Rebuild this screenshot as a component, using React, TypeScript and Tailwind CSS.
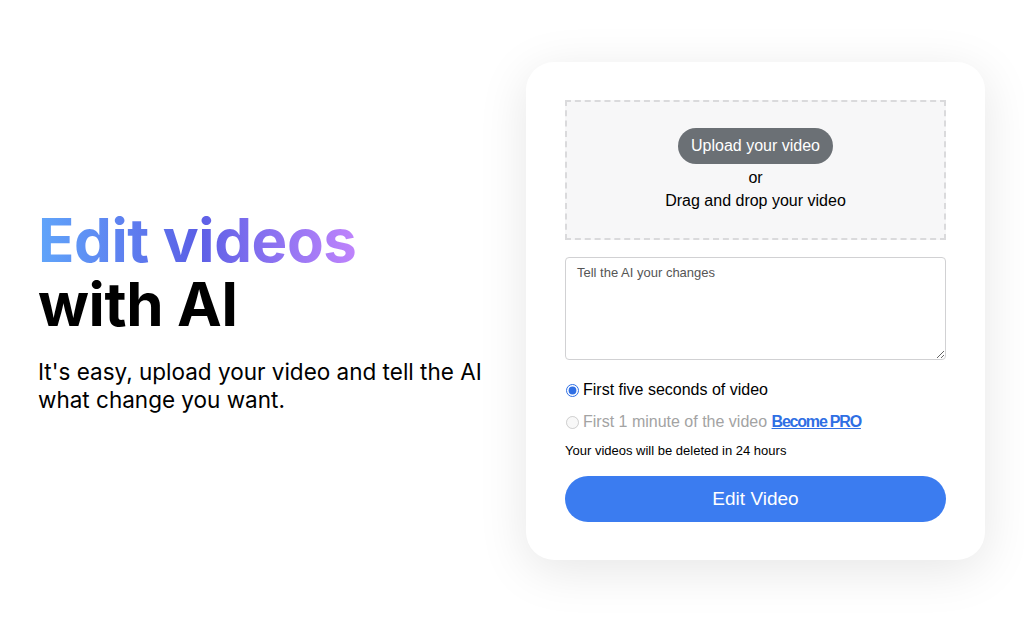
import { useState } from 'react';

export default function App() {
  const [prompt, setPrompt] = useState('');
  const [length, setLength] = useState('five');

  return (
    <div className="min-h-[618px] w-full bg-white flex items-center font-['Liberation_Sans',Arial,sans-serif] text-black">
      <div className="flex items-center w-full pl-[38px] pr-[39px]">
        <div className="flex-1 font-['Inter',sans-serif] mt-[4px]">
          <h1 className="text-[60px] font-bold leading-[64px] tracking-[-0.4px]">
            <span className="block bg-gradient-to-r from-[#60a5fa] via-[#5b5fe6] to-[#c084fc] bg-clip-text text-transparent w-fit">
              Edit videos
            </span>
            <span className="block">with AI</span>
          </h1>
          <p className="mt-[22px] text-[22.5px] leading-[28px] text-black">
            It's easy, upload your video and tell the AI
            <br />
            what change you want.
          </p>
        </div>

        <div className="w-[459px] mt-[4px] bg-white rounded-[28px] shadow-[0_10px_50px_rgba(0,0,0,0.10)] px-[39px] pt-[38px] pb-[38px]">
          <div className="h-[140px] bg-[#f7f7f8] border-2 border-dashed border-[#dadadc] flex flex-col items-center justify-center">
            <button className="h-[36px] px-[13px] rounded-full bg-[#6b7075] text-white text-[16px]">
              Upload your video
            </button>
            <span className="text-[16px] leading-[22px] mt-[3px]">or</span>
            <span className="text-[16px] leading-[22px] mt-[1px]">Drag and drop your video</span>
          </div>

          <textarea
            value={prompt}
            onChange={(e) => setPrompt(e.target.value)}
            placeholder="Tell the AI your changes"
            className="mt-[17px] block w-full h-[103px] rounded-[4px] border border-[#d1d1d3] px-[11px] py-[5px] text-[13px] placeholder:text-[#555] outline-none"
          />

          <div className="mt-[20px] flex flex-col gap-[12px] text-[16px]">
            <label className="flex items-center gap-[4px] h-[20px]">
              <input
                type="radio"
                name="length"
                checked={length === 'five'}
                onChange={() => setLength('five')}
                className="w-[13px] h-[13px] m-0 ml-[1px] accent-[#2f6fe4]"
              />
              <span>First five seconds of video</span>
            </label>
            <label className="flex items-center gap-[4px] h-[20px] text-[#a3a3a3]">
              <input type="radio" name="length" disabled className="w-[13px] h-[13px] m-0 ml-[1px]" />
              <span>
                First 1 minute of the video{' '}
                <a href="#" className="text-[#2f6fe4] font-bold underline tracking-[-1.2px]">
                  Become PRO
                </a>
              </span>
            </label>
          </div>

          <p className="mt-[9px] text-[13px] leading-[20px]">Your videos will be deleted in 24 hours</p>

          <button className="mt-[15px] w-full h-[46px] rounded-full bg-[#3b7cf0] text-white text-[19px]">
            Edit Video
          </button>
        </div>
      </div>
    </div>
  );
}
